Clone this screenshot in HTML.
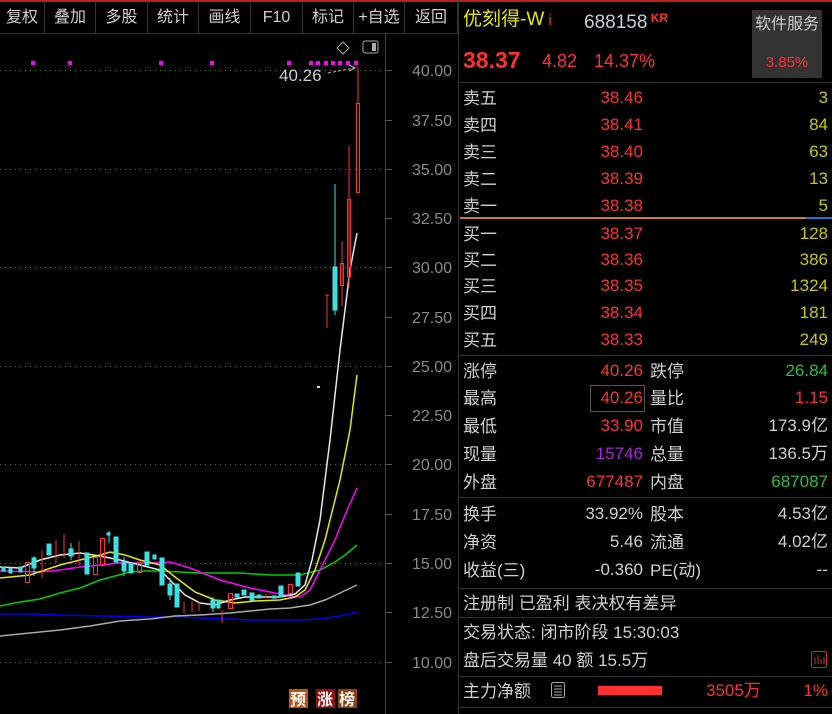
<!DOCTYPE html>
<html><head><meta charset="utf-8"><style>
*{margin:0;padding:0;box-sizing:border-box}
body{width:832px;height:714px;background:#000;overflow:hidden;position:relative;font-family:"Liberation Sans","Noto Sans CJK SC",sans-serif;color:#c8c8c8}
.a{position:absolute;white-space:nowrap;line-height:1}
.tb{position:absolute;top:2px;height:31px;border-right:1px solid #333;font-size:16px;color:#d0d0d0;text-align:center;line-height:31px}
.r{color:#ff3030}.g{color:#20c040}.y{color:#c8c800}.w{color:#d0d0d0}
.hl{position:absolute;left:458px;right:0;height:1px;background:#333}
.lb{position:absolute;left:463px;font-size:17px;color:#d0d0d0;line-height:1;white-space:nowrap;transform:translateY(1px)}
.v1{position:absolute;right:189px;font-size:17px;text-align:right;line-height:1}
.l2{position:absolute;left:650px;font-size:17px;color:#d0d0d0;line-height:1;transform:translateY(1px)}
.v2{position:absolute;right:4px;font-size:17px;text-align:right;line-height:1;white-space:nowrap}
</style></head><body>
<div class="a" style="left:0;top:0;width:832px;height:2px;background:#c02020"></div>
<div class="tb" style="left:0;width:45px">复权</div>
<div class="tb" style="left:45px;width:51px">叠加</div>
<div class="tb" style="left:96px;width:52px">多股</div>
<div class="tb" style="left:148px;width:51px">统计</div>
<div class="tb" style="left:199px;width:52px">画线</div>
<div class="tb" style="left:251px;width:52px">F10</div>
<div class="tb" style="left:303px;width:51px">标记</div>
<div class="tb" style="left:354px;width:51px">+自选</div>
<div class="tb" style="left:405px;width:53px">返回</div>
<div class="a" style="left:0;top:33px;width:458px;height:1px;background:#333"></div>
<div class="a" style="left:458px;top:0;width:1px;height:714px;background:#333"></div>

<svg class="a" style="left:0;top:0" width="458" height="714">
<g stroke="#666" stroke-dasharray="1,4" stroke-width="1">
<line x1="0" y1="70.5" x2="385" y2="70.5"/><line x1="0" y1="169.5" x2="385" y2="169.5"/><line x1="0" y1="267.5" x2="385" y2="267.5"/><line x1="0" y1="366.5" x2="385" y2="366.5"/><line x1="0" y1="464.5" x2="385" y2="464.5"/><line x1="0" y1="563.5" x2="385" y2="563.5"/><line x1="0" y1="662.5" x2="385" y2="662.5"/>
</g>
<line x1="385.5" y1="34" x2="385.5" y2="714" stroke="#444"/>
<g stroke="#555"><line x1="385" y1="70.5" x2="392" y2="70.5"/><line x1="385" y1="120.5" x2="392" y2="120.5"/><line x1="385" y1="169.5" x2="392" y2="169.5"/><line x1="385" y1="218.5" x2="392" y2="218.5"/><line x1="385" y1="267.5" x2="392" y2="267.5"/><line x1="385" y1="317.5" x2="392" y2="317.5"/><line x1="385" y1="366.5" x2="392" y2="366.5"/><line x1="385" y1="415.5" x2="392" y2="415.5"/><line x1="385" y1="464.5" x2="392" y2="464.5"/><line x1="385" y1="514.5" x2="392" y2="514.5"/><line x1="385" y1="563.5" x2="392" y2="563.5"/><line x1="385" y1="612.5" x2="392" y2="612.5"/><line x1="385" y1="662.5" x2="392" y2="662.5"/></g>
<g font-size="16" fill="#8a8a8a" font-family="Liberation Sans" text-anchor="end">
<text x="452" y="76">40.00</text><text x="452" y="126">37.50</text><text x="452" y="175">35.00</text><text x="452" y="224">32.50</text><text x="452" y="273">30.00</text><text x="452" y="323">27.50</text><text x="452" y="372">25.00</text><text x="452" y="421">22.50</text><text x="452" y="470">20.00</text><text x="452" y="520">17.50</text><text x="452" y="569">15.00</text><text x="452" y="618">12.50</text><text x="452" y="668">10.00</text>
</g>
<g fill="#ff00ff"><rect x="31" y="61" width="4" height="4"/><rect x="68" y="61" width="4" height="4"/><rect x="159" y="61" width="4" height="4"/><rect x="210" y="61" width="4" height="4"/><rect x="287" y="61" width="4" height="4"/><rect x="309" y="61" width="4" height="4"/><rect x="316" y="61" width="4" height="4"/><rect x="324" y="61" width="4" height="4"/><rect x="331" y="61" width="4" height="4"/><rect x="338" y="61" width="4" height="4"/><rect x="346" y="61" width="4" height="4"/><rect x="354" y="61" width="4" height="4"/></g>
<path d="M343 42 L349 48 L343 54 L337 48Z" fill="none" stroke="#aaa"/>
<rect x="363" y="41" width="15" height="12" rx="2" fill="none" stroke="#aaa"/><rect x="372" y="43" width="4" height="8" fill="#aaa"/>
<text x="279" y="81" font-size="17" fill="#c8d0d8" font-family="Liberation Sans">40.26</text>
<path d="M328 73 L354 68" stroke="#bbb" stroke-dasharray="3,2" fill="none"/><path d="M349 65 L355 68 L349 71" stroke="#bbb" fill="none"/>
<g fill="none" stroke-width="1.5">
<polyline stroke="#0000ee" points="0,614 30,614 60,615 100,616 150,617 180,617 200,618 230,619 250,620 270,620 300,620 320,619 340,616 357,612"/>
<polyline stroke="#aaaaaa" points="0,636 30,633 60,630 90,626 120,621 150,619 175,616 200,615 230,613 250,611 270,609 290,608 310,605 325,600 340,593 357,585"/>
<polyline stroke="#00cc00" points="0,606 20,602 40,599 60,593 80,588 100,580 115,576 130,572 145,571 160,571 180,572 200,573 240,573 270,575 300,575 320,570 335,562 345,555 357,545"/>
<polyline stroke="#ff00ff" points="0,571 40,572 60,570 80,567 100,565 120,563 150,563 170,562 190,568 220,580 250,588 270,592 290,596 300,597 310,590 320,570 335,540 345,515 357,488"/>
<polyline stroke="#e8e800" points="0,578 30,575 60,565 80,560 100,555 110,552 125,555 140,560 160,565 175,577 195,592 215,600 235,603 255,601 280,600 295,597 305,590 315,570 325,540 340,480 350,430 357,375"/>
<polyline stroke="#e8e8e8" points="0,567 20,568 40,560 60,555 80,553 100,556 120,560 140,565 160,570 170,580 185,595 200,603 215,605 230,600 245,597 260,597 280,597 295,594 305,585 312,560 320,520 330,440 340,350 350,270 357,233"/>
</g>
<rect x="317" y="386" width="3" height="2" fill="#ddd"/>
<g fill="#40e0e0" stroke="#40e0e0">
<rect x="2" y="567" width="3" height="4"/><rect x="9" y="568" width="3" height="5"/><rect x="19" y="567" width="3" height="5"/><rect x="32" y="558" width="4" height="10"/><line x1="34" y1="556" x2="34" y2="576"/><rect x="47" y="544" width="4" height="11"/><rect x="69" y="549" width="4" height="7"/><line x1="71" y1="543" x2="71" y2="560"/><rect x="85" y="553" width="4" height="21"/><rect x="107" y="533" width="3" height="2"/><line x1="109" y1="531" x2="109" y2="543"/><rect x="114" y="537" width="4" height="25"/><rect x="122" y="562" width="4" height="9"/><line x1="124" y1="557" x2="124" y2="576"/><rect x="129" y="563" width="4" height="10"/><rect x="145" y="552" width="4" height="13"/><rect x="153" y="555" width="3" height="4"/><rect x="160" y="558" width="4" height="27"/><rect x="168" y="584" width="4" height="11"/><line x1="170" y1="578" x2="170" y2="600"/><rect x="175" y="584" width="4" height="23"/><rect x="211" y="600" width="4" height="8"/><line x1="213" y1="597" x2="213" y2="612"/><rect x="217" y="600" width="3" height="8"/><rect x="235" y="594" width="4" height="3"/><rect x="242" y="590" width="4" height="5"/><rect x="250" y="593" width="4" height="7"/><rect x="257" y="595" width="4" height="3"/><rect x="272" y="596" width="4" height="2"/><rect x="279" y="586" width="4" height="11"/><rect x="296" y="573" width="4" height="13"/>
<rect x="333" y="267" width="4" height="43"/><line x1="335" y1="184" x2="335" y2="315"/>
</g>
<g stroke="#ff3030" fill="none">
<rect x="25.5" y="562.5" width="4" height="20"/><line x1="42" y1="550" x2="42" y2="578"/><line x1="56" y1="540" x2="56" y2="563"/><line x1="64" y1="534" x2="64" y2="558"/><line x1="79" y1="541" x2="79" y2="565"/><rect x="93.5" y="557.5" width="4" height="17"/><rect x="100.5" y="538.5" width="4" height="27"/><rect x="137.5" y="562.5" width="4" height="10"/><line x1="184" y1="602" x2="184" y2="613"/><line x1="192" y1="601" x2="192" y2="612"/><line x1="199" y1="602" x2="199" y2="611"/><line x1="222" y1="610" x2="222" y2="623"/><rect x="228.5" y="593.5" width="4" height="15"/><line x1="266" y1="594" x2="266" y2="598"/><rect x="288.5" y="584.5" width="4" height="9"/>
<line x1="327" y1="295" x2="327" y2="328"/><line x1="325" y1="295" x2="329" y2="295"/>
<rect x="340.5" y="263.5" width="3" height="22"/><line x1="342" y1="241" x2="342" y2="306"/>
<rect x="347.5" y="199.5" width="3" height="77"/><line x1="349" y1="146" x2="349" y2="287"/>
<rect x="356.5" y="103.5" width="3" height="89"/><line x1="358" y1="67" x2="358" y2="103"/>
</g>
<g font-size="16" font-weight="bold" text-anchor="middle" fill="#fff">
<rect x="289" y="689" width="19" height="19" fill="#c05010"/><text x="298" y="705">预</text>
<rect x="316" y="689" width="19" height="19" fill="#901010"/><text x="325" y="705">涨</text>
<rect x="338" y="689" width="19" height="19" fill="#904010"/><text x="347" y="705">榜</text>
</g>
</svg>

<div class="a" style="left:463px;top:10px;font-size:19px;color:#e8e800">优刻得-W<span style="color:#ff3030;font-size:15px"> i</span></div>
<div class="a" style="left:584px;top:12px;font-size:19px;color:#c8d0d8">688158<span style="color:#ff3030;font-size:12px;vertical-align:6px;font-weight:bold"> KR</span></div>
<div class="a" style="left:752px;top:10px;width:70px;height:68px;background:#333"></div>
<div class="a" style="left:752px;top:17px;width:70px;text-align:center;font-size:16px;color:#ccc">软件服务</div>
<div class="a" style="left:752px;top:55px;width:70px;text-align:center;font-size:15px;color:#ff3030">3.85%</div>
<div class="a r" style="left:463px;top:49px;font-size:23px;font-weight:bold">38.37</div>
<div class="a r" style="left:542px;top:52px;font-size:18px">4.82</div>
<div class="a r" style="left:594px;top:52px;font-size:18px">14.37%</div>

<div class="hl" style="top:82px"></div>
<div class="lb" style="top:89px">卖五</div><div class="v1 r" style="top:89px">38.46</div><div class="v2 y" style="top:89px">3</div>
<div class="lb" style="top:116px">卖四</div><div class="v1 r" style="top:116px">38.41</div><div class="v2 y" style="top:116px">84</div>
<div class="lb" style="top:143px">卖三</div><div class="v1 r" style="top:143px">38.40</div><div class="v2 y" style="top:143px">63</div>
<div class="lb" style="top:170px">卖二</div><div class="v1 r" style="top:170px">38.39</div><div class="v2 y" style="top:170px">13</div>
<div class="lb" style="top:197px">卖一</div><div class="v1 r" style="top:197px">38.38</div><div class="v2 y" style="top:197px">5</div>
<div class="a" style="left:460px;top:217px;width:346px;height:2px;background:#d08010"></div>
<div class="a" style="left:806px;top:217px;width:26px;height:2px;background:#2070d0"></div>
<div class="lb" style="top:225px">买一</div><div class="v1 r" style="top:225px">38.37</div><div class="v2 y" style="top:225px">128</div>
<div class="lb" style="top:251px">买二</div><div class="v1 r" style="top:251px">38.36</div><div class="v2 y" style="top:251px">386</div>
<div class="lb" style="top:277px">买三</div><div class="v1 r" style="top:277px">38.35</div><div class="v2 y" style="top:277px">1324</div>
<div class="lb" style="top:304px">买四</div><div class="v1 r" style="top:304px">38.34</div><div class="v2 y" style="top:304px">181</div>
<div class="lb" style="top:331px">买五</div><div class="v1 r" style="top:331px">38.33</div><div class="v2 y" style="top:331px">249</div>
<div class="hl" style="top:355px"></div>
<div class="lb" style="top:362px">涨停</div><div class="v1 r" style="top:362px">40.26</div><div class="l2" style="top:362px">跌停</div><div class="v2 g" style="top:362px">26.84</div>
<div class="a" style="left:590px;top:385px;width:55px;height:27px;border:1px solid #555"></div>
<div class="lb" style="top:389px">最高</div><div class="v1 r" style="top:389px">40.26</div><div class="l2" style="top:389px">量比</div><div class="v2 r" style="top:389px">1.15</div>
<div class="lb" style="top:417px">最低</div><div class="v1 r" style="top:417px">33.90</div><div class="l2" style="top:417px">市值</div><div class="v2 w" style="top:417px">173.9亿</div>
<div class="lb" style="top:445px">现量</div><div class="v1" style="top:445px;color:#b020e0">15746</div><div class="l2" style="top:445px">总量</div><div class="v2 w" style="top:445px">136.5万</div>
<div class="lb" style="top:473px">外盘</div><div class="v1 r" style="top:473px">677487</div><div class="l2" style="top:473px">内盘</div><div class="v2 g" style="top:473px">687087</div>
<div class="hl" style="top:497px"></div>
<div class="lb" style="top:505px">换手</div><div class="v1 w" style="top:505px">33.92%</div><div class="l2" style="top:505px">股本</div><div class="v2 w" style="top:505px">4.53亿</div>
<div class="lb" style="top:533px">净资</div><div class="v1 w" style="top:533px">5.46</div><div class="l2" style="top:533px">流通</div><div class="v2 w" style="top:533px">4.02亿</div>
<div class="lb" style="top:561px">收益(三)</div><div class="v1 w" style="top:561px">-0.360</div><div class="l2" style="top:561px">PE(动)</div><div class="v2 w" style="top:561px">--</div>
<div class="hl" style="top:588px"></div>
<div class="lb" style="top:594px">注册制 已盈利 表决权有差异</div>
<div class="hl" style="top:617px"></div>
<div class="lb" style="top:623px">交易状态: 闭市阶段 15:30:03</div>
<div class="lb" style="top:651px">盘后交易量 40 额 15.5万</div>
<svg class="a" style="left:811px;top:651px" width="16" height="17"><rect x="0.5" y="0.5" width="15" height="16" rx="2" fill="none" stroke="#d03030"/><path d="M4 13V7M7 13V4M10 13V8M13 13V6" stroke="#d03030"/></svg>
<div class="hl" style="top:676px"></div>
<div class="lb" style="top:682px">主力净额</div>
<svg class="a" style="left:551px;top:682px" width="15" height="17"><rect x="0.5" y="0.5" width="13" height="15" rx="2" fill="none" stroke="#aaa"/><path d="M3 4H11M3 7H11M3 10H11M3 13H11" stroke="#aaa"/></svg>
<div class="a" style="left:598px;top:686px;width:64px;height:9px;background:#ff3030"></div>
<div class="a r" style="left:706px;top:682px;font-size:17px">3505万</div>
<div class="a r" style="right:4px;top:682px;font-size:17px">1%</div>
<div class="hl" style="top:707px"></div>
</body></html>
